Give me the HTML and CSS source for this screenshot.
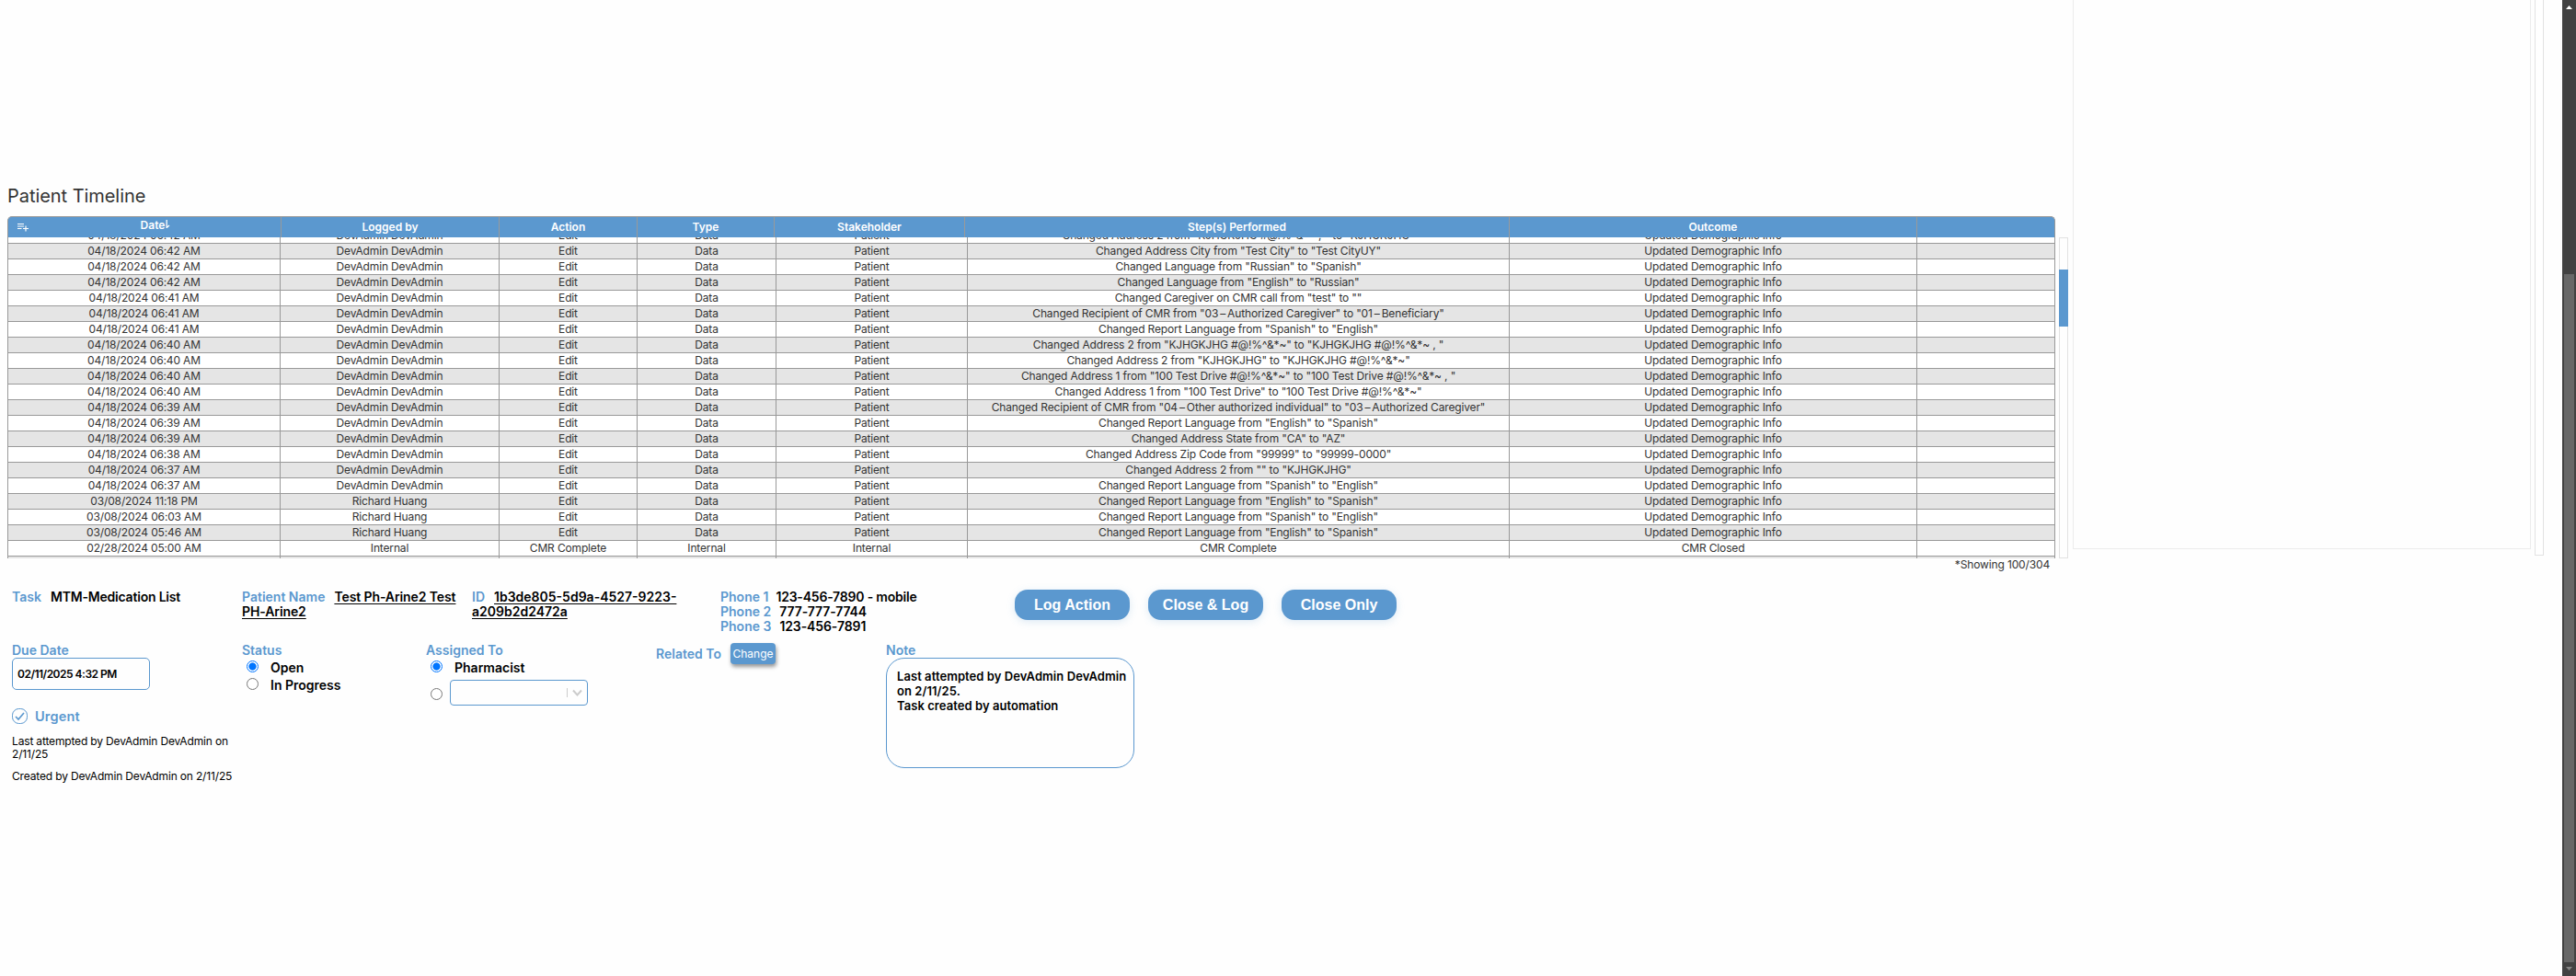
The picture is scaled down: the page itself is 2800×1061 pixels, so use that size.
FILE: index.html
```html
<!DOCTYPE html>
<html lang="en">
<head>
<meta charset="utf-8">
<title>Patient Timeline</title>
<link rel="stylesheet" href="styles.css">
</head>
<body>
<div class="app">
  <main class="main">
    <h1 class="title"><span>Patient Timeline</span></h1>
    <div class="timeline">
      <div class="grid">
        <div class="head">
          <div class="first"><svg class="add" viewBox="0 0 12 10" width="12" height="10"><path d="M0 1.5h7M0 4h7M0 6.5h4.5M9 3.5v6M6 6.5h6" stroke="#fff" stroke-width="1.2" fill="none"/></svg><span class="date">Date<svg viewBox="0 0 5 9" width="5" height="9"><path d="M1.2 0v8.5L4 6" stroke="#fff" fill="none" stroke-width="1.3"/></svg></span></div>
          <div>Logged by</div><div>Action</div><div>Type</div><div>Stakeholder</div><div>Step(s) Performed</div><div>Outcome</div><div></div>
        </div>
        <div class="body" id="rows"></div>
      </div>
      <div class="scroll"><div class="thumb"></div></div>
    </div>
    <div class="showing"><span>*Showing 100/304</span></div>
    <section class="top">
      <div class="task"><b>Task</b><span class="v">MTM-Medication List</span></div>
      <div class="name"><b>Patient Name</b><u class="v">Test Ph-Arine2 Test</u><br><u>PH-Arine2</u></div>
      <div class="pid"><b>ID</b><u class="v">1b3de805-5d9a-4527-9223-</u><br><u>a209b2d2472a</u></div>
      <div class="phones"><b>Phone 1</b><span>123-456-7890 - mobile</span><br><b>Phone 2</b><span class="p2">777-777-7744</span><br><b>Phone 3</b><span class="p2">123-456-7891</span></div>
      <div class="buttons"><button>Log Action</button><button>Close &amp; Log</button><button>Close Only</button></div>
    </section>
    <section class="bottom">
      <div class="due">
        <b>Due Date</b>
        <div class="datebox"><span>02/11/2025 4:32 PM</span></div>
        <div class="urgent"><svg viewBox="0 0 17 17" width="17" height="17"><rect x=".5" y=".5" width="16" height="16" rx="7" fill="none" stroke="#5b98cf"/><path d="M4 9l3 3 6-7" fill="none" stroke="#5b98cf" stroke-width="1.7"/></svg><b>Urgent</b></div>
        <p>Last attempted by DevAdmin DevAdmin on<br>2/11/25</p>
        <p>Created by DevAdmin DevAdmin on 2/11/25</p>
      </div>
      <div class="status"><b>Status</b>
        <div class="opt"><i class="radio on"></i><span>Open</span></div>
        <div class="opt"><i class="radio"></i><span>In Progress</span></div>
      </div>
      <div class="assigned"><b>Assigned To</b>
        <div class="opt"><i class="radio on"></i><span>Pharmacist</span></div>
        <div class="pick"><i class="radio"></i><div class="select"><svg viewBox="0 0 20 12" width="20" height="12"><path d="M1.5 1v10" stroke="#ccc"/><path d="M8 3.5l4.5 5 4.5-5" stroke="#ccc" stroke-width="2" fill="none"/></svg></div></div>
      </div>
      <div class="related"><b>Related To</b><span class="change">Change</span></div>
      <div class="notes"><b>Note</b><div class="note"><span>Last attempted by DevAdmin DevAdmin<br>on 2/11/25.<br>Task created by automation</span></div></div>
    </section>
  </main>
  <aside class="panel"></aside>
  <div class="track"></div>
  <div class="pagebar"><svg viewBox="0 0 7 4" width="7" height="4"><path d="M3.5 0L7 4H0z" fill="#fff"/></svg><div></div><svg viewBox="0 0 7 4" width="7" height="4"><path d="M3.5 4L7 0H0z" fill="#868686"/></svg></div>
</div>
<script src="rows.js"></script>
</body>
</html>
```
FILE: styles.css
```css
* { box-sizing: border-box; }
body { margin: 0; background: #fefefe; font-family: Inter, "Open Sans", sans-serif; color: #000; font-size: 14px; }
b { color: #5b98cf; font-weight: 600; }
.app { display: flex; align-items: flex-start; width: 2800px; height: 1061px; overflow: hidden; }
.main { width: 2253px; padding: 199px 0 0 8px; }
.title { margin: 0; height: 36px; font-size: 20px; line-height: 28px; font-weight: 400; color: #333; letter-spacing: -.05px; }
.timeline { display: flex; gap: 4px; align-items: flex-end; height: 372px; }
.grid { width: 2226px; height: 372px; }
.head, .row { display: grid; }
.head { grid-template-columns: 297px 237px 150px 149px 207px 592px 443px 151px; height: 23px; border: 1px solid #999; border-bottom: 0; border-radius: 5px 5px 0 0; background: #5b98cf; color: #fff; font-size: 12px; font-weight: 600; text-align: center; line-height: 22px; overflow: hidden; }
.head > div { border-right: 1px solid #999; }
.head > div:last-child { border: 0; }
.first { display: flex; align-items: center; padding-left: 10px; }
.date { flex: 1; line-height: 18px; align-self: flex-start; padding-left: 2px; }
.date svg { margin-left: 1px; vertical-align: 1px; }
.body { height: 349px; overflow: hidden; border: 1px solid #999; border-width: 0 1px; }
.row { grid-template-columns: 296px 238px 150px 151px 208px 589px 443px 149px; height: 17px; border-bottom: 1px solid #999; font-size: 12px; line-height: 16px; letter-spacing: -.15px; text-align: center; color: #333; background: #fff; }
.row:first-child { margin-top: -10px; }
.row:nth-child(even) { background: #e5e5e5; }
.row > div { border-right: 1px solid #999; height: 16px; white-space: nowrap; }
.row > div:last-child { border: 0; }
.scroll { width: 10px; height: 349px; border: 1px solid #e2e2e2; padding-top: 34px; }
.thumb { width: 10px; height: 62px; margin-left: -1px; background: #5b98cf; }
.showing { height: 31px; width: 2220px; text-align: right; font-size: 12px; line-height: 14px; letter-spacing: -.14px; color: #333; }
.top { display: grid; grid-template-columns: 250px 250px 270px 320px auto; padding: 3px 0 0 5px; height: 61px; line-height: 16px; font-weight: 600; white-space: nowrap; justify-content: start; }
.top .v { margin-left: 10px; }
.task .v { letter-spacing: -.2px; }
.name u { letter-spacing: -.1px; }
.phones span { margin-left: 8px; letter-spacing: -.2px; }
.phones .p2 { margin-left: 9px; letter-spacing: -.1px; }
.top u { text-underline-offset: 2px; }
.buttons { display: flex; gap: 20px; }
.buttons button { width: 125px; height: 33px; border: 0; border-radius: 14px; background: #5b98cf; color: #fff; font: 700 16px/33px "Liberation Sans", sans-serif; padding: 0; box-shadow: 0 2px 8px #5b98cf35; }
.bottom { display: grid; grid-template-columns: 250px 200px 250px 250px 300px; padding-left: 5px; line-height: 16px; }
.bottom b { display: block; height: 16px; }
.datebox { width: 150px; height: 35px; border: 1px solid #5b98cf; border-radius: 5px; padding-left: 5px; line-height: 33px; font-size: 12px; font-weight: 600; letter-spacing: -.5px; }
.urgent { display: flex; gap: 8px; margin-top: 20px; height: 17px; }
.urgent b { font-size: 14.5px; line-height: 18px; letter-spacing: .2px; }
.due p { margin: 0 0 10px; font-size: 12px; line-height: 14px; letter-spacing: -.16px; white-space: nowrap; }
.due .urgent + p { margin-top: 12px; }
.opt { display: flex; height: 19px; font-weight: 600; line-height: 22px; }
.radio { width: 13px; height: 13px; margin: 3px 13px 0 5px; border: 1px solid #767676; border-radius: 50%; background: #fff; flex: none; }
.on { border-color: #0075ff; background: radial-gradient(#0075ff 3.8px, #fff 4.4px); }
.pick { display: flex; margin-top: 5px; }
.pick .radio { margin: 9px 8px 0 5px; }
.select { width: 150px; height: 28px; border: 1px solid #5b98cf; border-radius: 4px; padding: 7px 3px 0; text-align: right; line-height: 0; }
.related { display: flex; }
.related b { line-height: 24px; }
.change { width: 49px; height: 23px; margin-left: 10px; border-radius: 4px; background: #5b98cf; color: #fff; font-size: 12px; line-height: 24px; text-align: center; box-shadow: 1px 3px 4px #0006; }
.note { width: 270px; height: 120px; border: 1px solid #5b98cf; border-radius: 20px; padding: 11px 0 0 11px; font-size: 13px; line-height: 16px; font-weight: 600; letter-spacing: .06px; white-space: nowrap; }
.panel { width: 498px; height: 597px; border: 1px solid #ececec; border-top: 0; }
.track { width: 10px; height: 604px; margin-left: 4px; border: 1px solid #e2e2e2; border-top: 0; background: #fff; }
.pagebar { width: 15px; height: 1061px; margin-left: auto; background: #424242; display: flex; flex-direction: column; align-items: center; padding-top: 6px; }
.pagebar div { width: 11px; height: 748px; margin: 288px 0 5px; background: #686868; flex: none; }
.pagebar svg { flex: none; }
```
FILE: rows.js
```js
const sym = '#@!%^&*~';
const dash = '\u2009–\u2009';
const rep = (a, b) => `Changed Report Language from "${a}" to "${b}"`;
const d = '04/18/2024 06:';
const data = [
  [d + '42 AM', `Changed Address 2 from "KJHGKJHG ${sym} , " to "KJHGKJHG"`],
  [d + '42 AM', 'Changed Address City from "Test City" to "Test CityUY"'],
  [d + '42 AM', 'Changed Language from "Russian" to "Spanish"'],
  [d + '42 AM', 'Changed Language from "English" to "Russian"'],
  [d + '41 AM', 'Changed Caregiver on CMR call from "test" to ""'],
  [d + '41 AM', `Changed Recipient of CMR from "03${dash}Authorized Caregiver" to "01${dash}Beneficiary"`],
  [d + '41 AM', rep('Spanish', 'English')],
  [d + '40 AM', `Changed Address 2 from "KJHGKJHG ${sym}" to "KJHGKJHG ${sym} , "`],
  [d + '40 AM', `Changed Address 2 from "KJHGKJHG" to "KJHGKJHG ${sym}"`],
  [d + '40 AM', `Changed Address 1 from "100 Test Drive ${sym}" to "100 Test Drive ${sym} , "`],
  [d + '40 AM', `Changed Address 1 from "100 Test Drive" to "100 Test Drive ${sym}"`],
  [d + '39 AM', `Changed Recipient of CMR from "04${dash}Other authorized individual" to "03${dash}Authorized Caregiver"`],
  [d + '39 AM', rep('English', 'Spanish')],
  [d + '39 AM', 'Changed Address State from "CA" to "AZ"'],
  [d + '38 AM', 'Changed Address Zip Code from "99999" to "99999-0000"'],
  [d + '37 AM', 'Changed Address 2 from "" to "KJHGKJHG"'],
  [d + '37 AM', rep('Spanish', 'English')],
  ['03/08/2024 11:18 PM', rep('English', 'Spanish'), 'Richard Huang'],
  ['03/08/2024 06:03 AM', rep('Spanish', 'English'), 'Richard Huang'],
  ['03/08/2024 05:46 AM', rep('English', 'Spanish'), 'Richard Huang']
].map(([t, step, who]) => [t, who || 'DevAdmin DevAdmin', 'Edit', 'Data', 'Patient', step, 'Updated Demographic Info', '']);
data.push(['02/28/2024 05:00 AM', 'Internal', 'CMR Complete', 'Internal', 'Internal', 'CMR Complete', 'CMR Closed', '']);
data.push(['', '', '', '', '', '', '', '']);
const host = document.getElementById('rows');
for (const r of data) {
  const row = document.createElement('div');
  row.className = 'row';
  for (const c of r) {
    const cell = document.createElement('div');
    const text = document.createElement('span');
    text.textContent = c;
    cell.append(text);
    row.append(cell);
  }
  host.append(row);
}
```
